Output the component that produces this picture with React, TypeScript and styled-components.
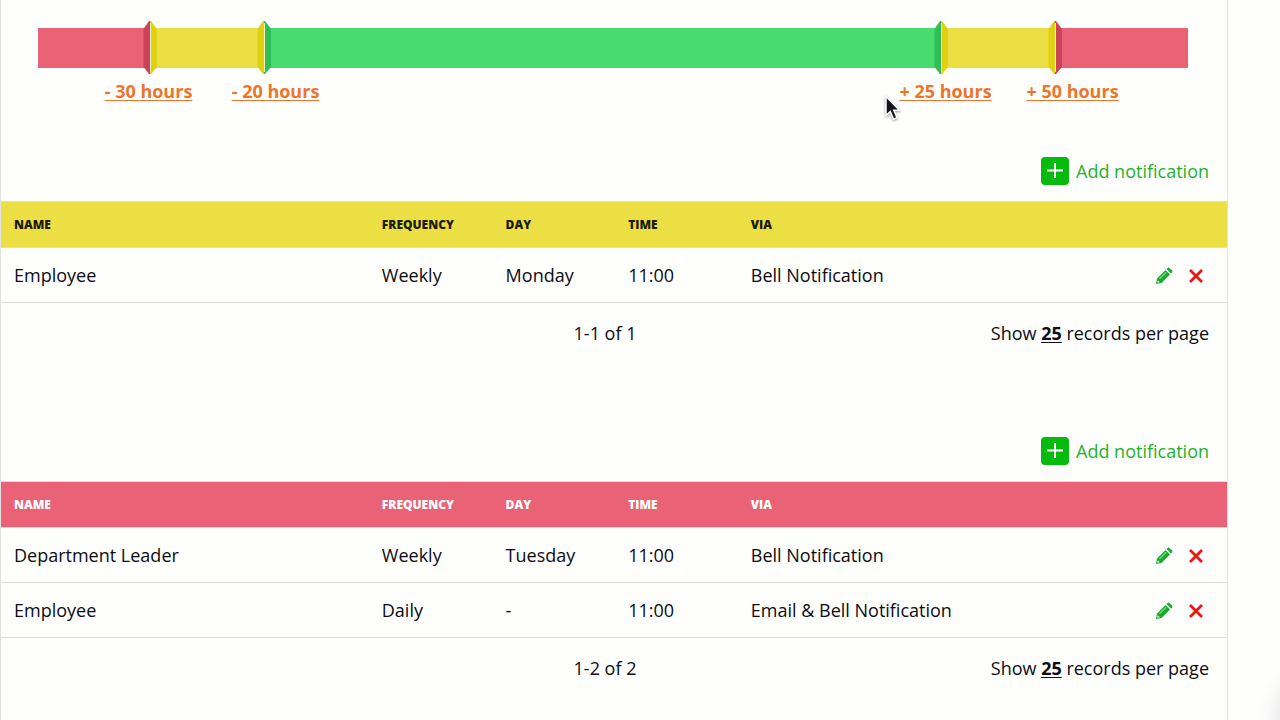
import React from "react";
import styled, { createGlobalStyle } from "styled-components";

const RED = "#e96275";
const YELLOW = "#ecdf43";
const GREEN = "#48db6e";
const DARK_RED = "#cb4359";
const DARK_YELLOW = "#dfd012";
const DARK_GREEN = "#2fbd55";
const LINE = "#dcdcde";

const GlobalStyle = createGlobalStyle`
  * { box-sizing: border-box; }
  body {
    margin: 0;
    background: #fefefd;
    color: #0c0c12;
    font-family: "Open Sans", "Noto Sans", sans-serif;
    font-size: 18px;
    line-height: 24px;
  }
`;

const Page = styled.div`
  position: relative;
  min-height: 100vh;
  padding-right: 52px;
  overflow: hidden;
`;

const Panel = styled.main`
  min-height: 100vh;
  padding-top: 28px;
  border: solid #e2e2e4;
  border-width: 0 1px;
`;

const Gauge = styled.div`
  display: grid;
  grid-template-columns: 112fr 114fr 677fr 114fr 133fr;
  height: 40px;
  margin: 0 39px 0 37px;
`;

const Segment = styled.div<{ $color: string }>`
  position: relative;
  background: ${(p) => p.$color};
`;

const HandleButton = styled.button`
  position: absolute;
  z-index: 1;
  top: -8px;
  right: -8px;
  width: 16px;
  height: 56px;
  padding: 0;
  border: 0;
  background: none;
  cursor: ew-resize;

  svg { display: block; }
`;

const Limits = styled.div`
  display: flex;
  justify-content: space-between;
  padding: 11px 91px 0 84px;
`;

const LimitPair = styled.div`
  display: flex;
`;

const Limit = styled.div`
  width: 127px;
  text-align: center;
`;

const LimitLink = styled.a`
  color: #ec752b;
  font-weight: 700;
  text-underline-offset: 2px;
`;

const Section = styled.section`
  padding-top: 54px;

  & + & { padding-top: 92px; }
`;

const Actions = styled.div`
  display: flex;
  justify-content: flex-end;
  padding: 0 18px 16px 0;
`;

const AddButton = styled.button`
  display: flex;
  align-items: center;
  gap: 7px;
  padding: 0;
  border: 0;
  background: none;
  color: #1fb22b;
  font: inherit;
  cursor: pointer;
`;

const PlusBox = styled.span`
  display: flex;
  align-items: center;
  justify-content: center;
  width: 28px;
  height: 28px;
  border-radius: 4px;
  background: #06bb0e;
`;

const Table = styled.table`
  width: 100%;
  table-layout: fixed;
  border-collapse: separate;
  border-spacing: 0;
`;

const HeadCell = styled.th<{ $bg: string; $fg: string; $width?: string }>`
  width: ${(p) => p.$width ?? "auto"};
  height: 47px;
  padding: 0 0 0 13px;
  border: solid ${LINE};
  border-width: 1px 0;
  background: ${(p) => p.$bg};
  color: ${(p) => p.$fg};
  font-size: 12px;
  line-height: 16px;
  font-weight: 800;
  text-align: left;
  text-transform: uppercase;
`;

const Cell = styled.td`
  height: 55px;
  padding: 0 0 0 13px;
  border-bottom: 1px solid ${LINE};
`;

const RowTools = styled.div`
  display: flex;
  justify-content: flex-end;
  gap: 12px;
  padding: 2px 21px 0 0;
`;

const ToolButton = styled.button`
  display: flex;
  align-items: center;
  justify-content: center;
  width: 20px;
  height: 20px;
  padding: 0;
  border: 0;
  background: none;
  cursor: pointer;
`;

const Footer = styled.div`
  display: grid;
  grid-template-columns: 1fr auto 1fr;
  padding: 18px 18px 0 0;
`;

const Count = styled.span`
  grid-column: 2;
`;

const PageSize = styled.span`
  text-align: right;
`;

const PageSizeLink = styled.a`
  color: inherit;
  font-weight: 700;
  text-underline-offset: 2px;
`;

const Pointer = styled.svg`
  position: absolute;
  top: 94px;
  left: 883px;
  pointer-events: none;
`;

const CornerGlow = styled.div`
  position: absolute;
  right: -60px;
  bottom: -40px;
  width: 60px;
  height: 80px;
  border-radius: 30px;
  box-shadow: 0 0 20px 2px rgba(60, 60, 90, 0.15);
`;

function Handle({ left, right, label }: { left: string; right: string; label: string }) {
  return (
    <HandleButton type="button" aria-label={label}>
      <svg width="16" height="56" viewBox="0 0 16 56">
        <path d="M8 1 L7 1 L1.5 9 V47 L7 54 H8 Z" fill={left} />
        <path d="M8 1 L9 1 L15 9 V47 L9 54 H8 Z" fill={right} />
        <path d="M8.5 3 V52" stroke="#f8f4c8" strokeWidth="1" />
      </svg>
    </HandleButton>
  );
}

function PencilIcon() {
  return (
    <svg width="18" height="18" viewBox="0 0 18 18">
      <path d="M1 17 L2 11.5 L10.5 3 L15 7.5 L6.500 16 Z" fill="#17aa2c" />
      <path d="M11.500 2 L12.800 .8 Q13.600 .2 14.400 .9 L17.100 3.600 Q17.700 4.400 17.100 5.200 L16 6.500 Z" fill="#17aa2c" />
      <path d="M4.500 11.800 L11.200 5.200" stroke="#7bdc86" strokeWidth="1.200" />
      <path d="M2.700 13.200 L4.900 15.300 L2.600 15.800 L2.200 15.300 Z" fill="#d9f6dc" />
    </svg>
  );
}

function CrossIcon() {
  return (
    <svg width="16" height="16" viewBox="0 0 16 16">
      <path d="M2 2 L14 14 M14 2 L2 14" stroke="#ee1411" strokeWidth="2.8" />
    </svg>
  );
}

type Notification = {
  name: string;
  frequency: string;
  day: string;
  time: string;
  via: string;
};

function NotificationSection({
  bg,
  fg,
  rows,
}: {
  bg: string;
  fg: string;
  rows: Notification[];
}) {
  const head = { $bg: bg, $fg: fg };
  return (
    <Section>
      <Actions>
        <AddButton type="button">
          <PlusBox>
            <svg width="16" height="16" viewBox="0 0 16 16">
              <path d="M8 0 V15 M0 7.500 H16" stroke="#fff" strokeWidth="2" />
            </svg>
          </PlusBox>
          Add notification
        </AddButton>
      </Actions>
      <Table>
        <thead>
          <tr>
            <HeadCell {...head} $width="30%">Name</HeadCell>
            <HeadCell {...head} $width="10.1%">Frequency</HeadCell>
            <HeadCell {...head} $width="10%">Day</HeadCell>
            <HeadCell {...head} $width="10%">Time</HeadCell>
            <HeadCell {...head}>Via</HeadCell>
            <HeadCell {...head} $width="10%" aria-label="Actions" />
          </tr>
        </thead>
        <tbody>
          {rows.map((r) => (
            <tr key={r.name}>
              <Cell>{r.name}</Cell>
              <Cell>{r.frequency}</Cell>
              <Cell>{r.day}</Cell>
              <Cell>{r.time}</Cell>
              <Cell>{r.via}</Cell>
              <Cell>
                <RowTools>
                  <ToolButton type="button" aria-label={`Edit ${r.name}`}>
                    <PencilIcon />
                  </ToolButton>
                  <ToolButton type="button" aria-label={`Delete ${r.name}`}>
                    <CrossIcon />
                  </ToolButton>
                </RowTools>
              </Cell>
            </tr>
          ))}
        </tbody>
      </Table>
      <Footer>
        <Count>{`1-${rows.length} of ${rows.length}`}</Count>
        <PageSize>
          Show <PageSizeLink href="#page-size">25</PageSizeLink> records per page
        </PageSize>
      </Footer>
    </Section>
  );
}

const warningRows: Notification[] = [
  { name: "Employee", frequency: "Weekly", day: "Monday", time: "11:00", via: "Bell Notification" },
];

const alertRows: Notification[] = [
  { name: "Department Leader", frequency: "Weekly", day: "Tuesday", time: "11:00", via: "Bell Notification" },
  { name: "Employee", frequency: "Daily", day: "-", time: "11:00", via: "Email & Bell Notification" },
];

export default function App() {
  return (
    <Page>
      <GlobalStyle />
      <Panel>
        <Gauge>
          <Segment $color={RED}>
            <Handle left={DARK_RED} right={DARK_YELLOW} label="Lower alert limit" />
          </Segment>
          <Segment $color={YELLOW}>
            <Handle left={DARK_YELLOW} right={DARK_GREEN} label="Lower warning limit" />
          </Segment>
          <Segment $color={GREEN}>
            <Handle left={DARK_GREEN} right={DARK_YELLOW} label="Upper warning limit" />
          </Segment>
          <Segment $color={YELLOW}>
            <Handle left={DARK_YELLOW} right={DARK_RED} label="Upper alert limit" />
          </Segment>
          <Segment $color={RED} />
        </Gauge>
        <Limits>
          <LimitPair>
            <Limit><LimitLink href="#minus-30">- 30 hours</LimitLink></Limit>
            <Limit><LimitLink href="#minus-20">- 20 hours</LimitLink></Limit>
          </LimitPair>
          <LimitPair>
            <Limit><LimitLink href="#plus-25">+ 25 hours</LimitLink></Limit>
            <Limit><LimitLink href="#plus-50">+ 50 hours</LimitLink></Limit>
          </LimitPair>
        </Limits>
        <NotificationSection bg={YELLOW} fg="#1d1b08" rows={warningRows} />
        <NotificationSection bg={RED} fg="#fff" rows={alertRows} />
      </Panel>
      <Pointer width="20" height="30" viewBox="0 0 20 30" aria-hidden="true">
        <path
          d="M3 2.500 V21.500 L7.300 17.600 L10.600 25.200 L14 23.700 L10.800 16.300 H16.500 Z"
          fill="#14141c"
          stroke="#fff"
          strokeWidth="1.500"
          filter="drop-shadow(0 1px 1px rgba(0,0,0,.4))"
        />
      </Pointer>
      <CornerGlow />
    </Page>
  );
}
